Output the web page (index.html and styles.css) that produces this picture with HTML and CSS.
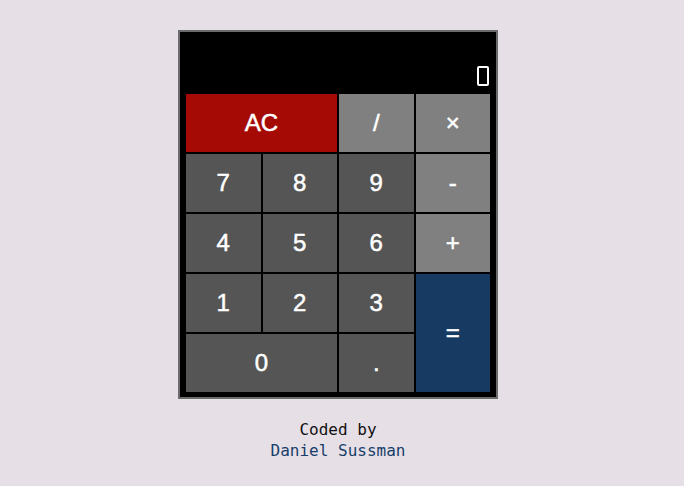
FILE: index.html
```html
<!DOCTYPE html>
<html>
<head>
<meta charset="utf-8">
<link rel="stylesheet" href="styles.css">
</head>
<body>
<main class="page">
  <div class="calculator">
    <div class="display"><span class="digit">0</span></div>
    <div class="keys">
      <button class="key clear span2">AC</button>
      <button class="key op">/</button>
      <button class="key op">×</button>
      <button class="key num">7</button>
      <button class="key num">8</button>
      <button class="key num">9</button>
      <button class="key op">-</button>
      <button class="key num">4</button>
      <button class="key num">5</button>
      <button class="key num">6</button>
      <button class="key op">+</button>
      <button class="key num">1</button>
      <button class="key num">2</button>
      <button class="key num">3</button>
      <button class="key equals">=</button>
      <button class="key num span2">0</button>
      <button class="key num">.</button>
    </div>
  </div>
  <footer class="credit">
    <div>Coded by</div>
    <div class="author">Daniel Sussman</div>
  </footer>
</main>
</body>
</html>
```
FILE: styles.css
```css
html, body {
  margin: 0;
  padding: 0;
}
body {
  background: #e6dfe5;
  width: 684px;
  height: 486px;
  overflow: hidden;
}
.page {
  display: flex;
  flex-direction: column;
  align-items: center;
  padding-top: 30px;
  padding-right: 8px;
}
.calculator {
  background: #000;
  border: 2px solid #6b6b6b;
  padding: 0 6px 5px 6px;
  box-sizing: content-box;
  width: 304px;
}
.display {
  height: 62px;
  display: flex;
  justify-content: flex-end;
  align-items: flex-end;
  padding-bottom: 8px;
  box-sizing: border-box;
}
.digit {
  display: block;
  width: 8px;
  height: 16px;
  border: 2px solid #fff;
  border-radius: 2px;
  margin-right: 1px;
  color: transparent;
  font-family: "Liberation Sans", Arial, sans-serif;
  font-size: 10px;
  line-height: 16px;
  text-align: center;
  overflow: hidden;
}
.keys {
  display: grid;
  grid-template-columns: repeat(4, 74.5px);
  grid-template-rows: repeat(5, 58px);
  gap: 2px;
}
.key {
  border: none;
  margin: 0;
  padding: 0;
  color: #fff;
  font-family: "Liberation Sans", Arial, sans-serif;
  font-size: 24px;
  -webkit-text-stroke: 0.5px #fff;
  display: flex;
  align-items: center;
  justify-content: center;
}
.span2 { grid-column: span 2; }
.clear { background: #a50a05; }
.op { background: #808080; }
.num { background: #555555; }
.equals {
  background: #173a63;
  grid-row: span 2;
}
.credit {
  margin-top: 20px;
  font-family: "DejaVu Sans Mono", monospace;
  font-size: 16px;
  line-height: 21px;
  text-align: center;
  color: #111;
}
.author {
  color: #173e6b;
}
```
